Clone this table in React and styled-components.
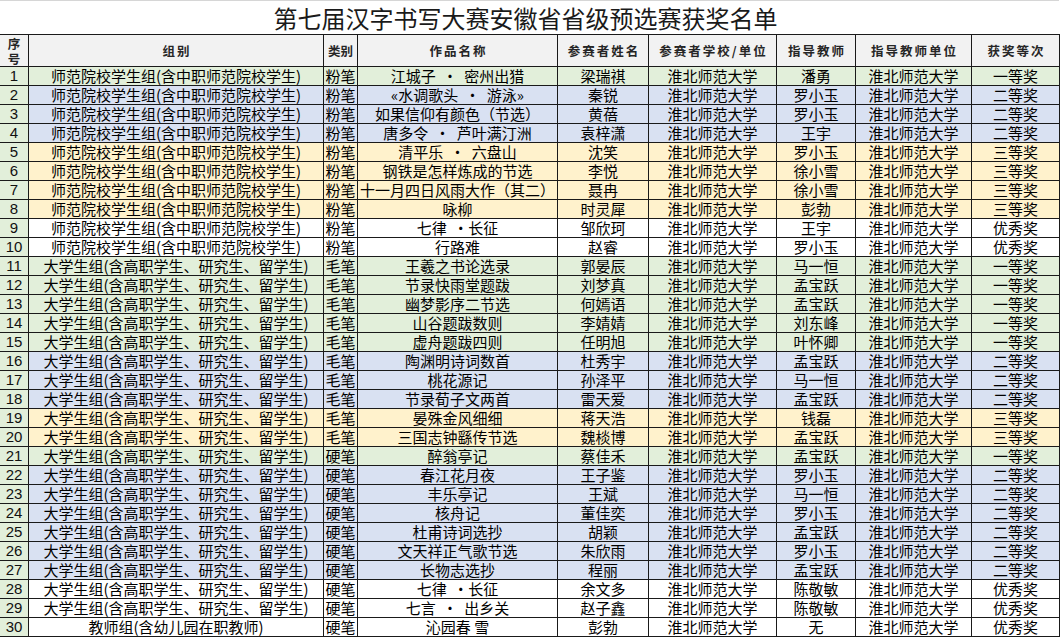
import React from "react";
import styled, { createGlobalStyle } from "styled-components";

const GlobalStyle = createGlobalStyle`
  html, body {
    margin: 0;
    padding: 0;
    background: #ffffff;
  }
  body {
    font-family: "Noto Sans CJK SC", sans-serif;
    color: #000;
  }
`;

const COLUMNS = "29px 295px 34px 200px 91px 128px 79px 116px 88px";

const TONES = {
  green: "#e2efda",
  blue: "#d9e1f2",
  orange: "#fff2cc",
  white: "#ffffff",
};

const Page = styled.div`
  width: 1061px;
  height: 639px;
  overflow: hidden;
  background: #fff;
`;

const TitleBar = styled.div`
  height: 34px;
  box-sizing: border-box;
  border-top: 1px solid #d6d6d6;
  display: flex;
  align-items: center;
  justify-content: center;
  width: 1059px;
  padding-right: 8px;
  font-family: "Noto Sans CJK SC", sans-serif;
  font-size: 24px;
  line-height: 33px;
  color: #1a1a1a;
`;

const Sheet = styled.div`
  width: 1060px;
  border-top: 1px solid #1a1a1a;
`;

const HeaderRow = styled.div`
  display: grid;
  grid-template-columns: ${COLUMNS};
  height: 32px;
  box-sizing: border-box;
  border-bottom: 1px solid #1a1a1a;
  background: #f2f2f2;
`;

const HeadCell = styled.div`
  display: flex;
  flex-direction: column;
  align-items: center;
  justify-content: center;
  border-right: 1px solid #1a1a1a;
  padding-left: ${(p) => (p.$tight ? "0" : "2px")};
  font-size: 12.5px;
  font-weight: 700;
  letter-spacing: ${(p) => (p.$tight ? "0" : "2px")};
  color: #262626;
  text-align: center;
  line-height: 15px;
  white-space: nowrap;
`;

const Row = styled.div`
  display: grid;
  grid-template-columns: ${COLUMNS};
  height: 19px;
  box-sizing: border-box;
  border-bottom: 1px solid #1a1a1a;
  background: ${(p) => TONES[p.$tone]};
`;

const Cell = styled.div`
  display: flex;
  align-items: center;
  justify-content: center;
  border-right: 1px solid #1a1a1a;
  font-size: 15px;
  line-height: 18px;
  white-space: pre;
  color: #000;
`;

const NumCell = styled(Cell)`
  background: ${TONES.green};
  font-family: "Liberation Sans", sans-serif;
  font-size: 15px;
  color: #111;
`;

const NORMAL = "师范院校学生组(含中职师范院校学生)";
const COLLEGE = "大学生组(含高职学生、研究生、留学生)";
const TEACHER = "教师组(含幼儿园在职教师)";
const SCHOOL = "淮北师范大学";

const rows = [
  [NORMAL, "粉笔", "江城子  ·  密州出猎", "梁瑞祺", "潘勇", "一等奖", "green"],
  [NORMAL, "粉笔", "«水调歌头  ·  游泳»", "秦锐", "罗小玉", "二等奖", "blue"],
  [NORMAL, "粉笔", "如果信仰有颜色（节选）", "黄蓓", "罗小玉", "二等奖", "blue"],
  [NORMAL, "粉笔", "唐多令  ·  芦叶满汀洲", "袁梓潇", "王宇", "二等奖", "blue"],
  [NORMAL, "粉笔", "清平乐  ·  六盘山", "沈笑", "罗小玉", "三等奖", "orange"],
  [NORMAL, "粉笔", "钢铁是怎样炼成的节选", "李悦", "徐小雪", "三等奖", "orange"],
  [NORMAL, "粉笔", "十一月四日风雨大作（其二）", "聂冉", "徐小雪", "三等奖", "orange"],
  [NORMAL, "粉笔", "咏柳", "时灵犀", "彭勃", "三等奖", "orange"],
  [NORMAL, "粉笔", "七律  ·长征", "邹欣珂", "王宇", "优秀奖", "white"],
  [NORMAL, "粉笔", "行路难", "赵睿", "罗小玉", "优秀奖", "white"],
  [COLLEGE, "毛笔", "王羲之书论选录", "郭晏辰", "马一恒", "一等奖", "green"],
  [COLLEGE, "毛笔", "节录快雨堂题跋", "刘梦真", "孟宝跃", "一等奖", "green"],
  [COLLEGE, "毛笔", "幽梦影序二节选", "何嫣语", "孟宝跃", "一等奖", "green"],
  [COLLEGE, "毛笔", "山谷题跋数则", "李婧婧", "刘东峰", "一等奖", "green"],
  [COLLEGE, "毛笔", "虚舟题跋四则", "任明旭", "叶怀卿", "一等奖", "green"],
  [COLLEGE, "毛笔", "陶渊明诗词数首", "杜秀宇", "孟宝跃", "二等奖", "blue"],
  [COLLEGE, "毛笔", "桃花源记", "孙泽平", "马一恒", "二等奖", "blue"],
  [COLLEGE, "毛笔", "节录荀子文两首", "雷天爱", "孟宝跃", "二等奖", "blue"],
  [COLLEGE, "毛笔", "晏殊金风细细", "蒋天浩", "钱磊", "三等奖", "orange"],
  [COLLEGE, "毛笔", "三国志钟繇传节选", "魏棪博", "孟宝跃", "三等奖", "orange"],
  [COLLEGE, "硬笔", "醉翁亭记", "蔡佳禾", "孟宝跃", "一等奖", "green"],
  [COLLEGE, "硬笔", "春江花月夜", "王子鉴", "罗小玉", "二等奖", "blue"],
  [COLLEGE, "硬笔", "丰乐亭记", "王斌", "马一恒", "二等奖", "blue"],
  [COLLEGE, "硬笔", "核舟记", "董佳奕", "罗小玉", "二等奖", "blue"],
  [COLLEGE, "硬笔", "杜甫诗词选抄", "胡颖", "孟宝跃", "二等奖", "blue"],
  [COLLEGE, "硬笔", "文天祥正气歌节选", "朱欣雨", "罗小玉", "二等奖", "blue"],
  [COLLEGE, "硬笔", "长物志选抄", "程丽", "孟宝跃", "二等奖", "blue"],
  [COLLEGE, "硬笔", "七律  ·长征", "余文多", "陈敬敏", "优秀奖", "white"],
  [COLLEGE, "硬笔", "七言  ·  出乡关", "赵子鑫", "陈敬敏", "优秀奖", "white"],
  [TEACHER, "硬笔", "沁园春 雪", "彭勃", "无", "优秀奖", "white"],
];

const headers = [
  "组别",
  "类别",
  "作品名称",
  "参赛者姓名",
  "参赛者学校/单位",
  "指导教师",
  "指导教师单位",
  "获奖等次",
];

export default function App() {
  return (
    <Page>
      <GlobalStyle />
      <TitleBar>第七届汉字书写大赛安徽省省级预选赛获奖名单</TitleBar>
      <Sheet>
        <HeaderRow>
          <HeadCell $tight>
            <span>序</span>
            <span>号</span>
          </HeadCell>
          {headers.map((h) => (
            <HeadCell key={h} $tight={h === "类别"}>
              {h}
            </HeadCell>
          ))}
        </HeaderRow>
        {rows.map(([group, kind, work, name, teacher, award, tone], i) => (
          <Row key={i} $tone={tone}>
            <NumCell>{i + 1}</NumCell>
            <Cell>{group}</Cell>
            <Cell>{kind}</Cell>
            <Cell>{work}</Cell>
            <Cell>{name}</Cell>
            <Cell>{SCHOOL}</Cell>
            <Cell>{teacher}</Cell>
            <Cell>{SCHOOL}</Cell>
            <Cell>{award}</Cell>
          </Row>
        ))}
      </Sheet>
    </Page>
  );
}
